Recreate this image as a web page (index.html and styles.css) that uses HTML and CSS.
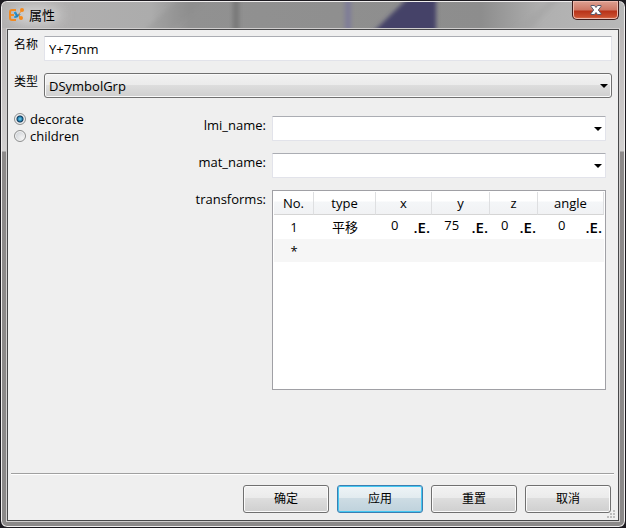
FILE: index.html
```html
<!DOCTYPE html>
<html lang="zh-CN">
<head>
<meta charset="utf-8">
<title>属性</title>
<link rel="stylesheet" href="styles.css">
</head>
<body>
<main class="window">
  <svg class="glass" viewBox="0 0 622 26" preserveAspectRatio="none" aria-hidden="true">
    <defs>
      <linearGradient id="base">
        <stop offset="0" stop-color="#b2b0b0"/>
        <stop offset=".24" stop-color="#acacac"/>
        <stop offset=".3" stop-color="#919191"/>
        <stop offset=".77" stop-color="#8d8d8d"/>
        <stop offset=".87" stop-color="#b0b0b0"/>
        <stop offset="1" stop-color="#b8b8b8"/>
      </linearGradient>
      <filter id="soft" x="-50%" y="-50%" width="200%" height="200%"><feGaussianBlur stdDeviation="2"/></filter>
      <filter id="halo" x="-50%" y="-50%" width="200%" height="200%"><feGaussianBlur stdDeviation="7"/></filter>
    </defs>
    <rect width="622" height="26" fill="url(#base)"/>
    <g filter="url(#soft)">
      <path d="M178 -4h28l-38 34h-28z" fill="#858585" opacity=".25"/>
      <path d="M231 -5h6v36h-6z" fill="#777"/>
      <path d="M343 -5h6v36h-6z" fill="#7e7c98"/>
      <path d="M407 -5h27v36h-64z" fill="#444268"/>
      <path d="M552 -5h8l-36 36h-16z" fill="#a2a2a2" opacity=".5"/>
    </g>
    <ellipse cx="34" cy="13" rx="26" ry="8" fill="#e4e4e4" opacity=".8" filter="url(#halo)"/>
  </svg>
  <header class="titlebar">
    <svg class="logo" viewBox="0 0 15 14" aria-hidden="true">
      <path d="M7 2H3Q1 2 1 4v6q0 2 2 2h4M2 7h3" fill="none" stroke="#f08a24" stroke-width="2"/>
      <path d="M6 4l2 4 3-2M6 9l3-1" fill="none" stroke="#2584bd" stroke-width="2"/>
      <path d="M13 2l-3 4 1 5" fill="none" stroke="#ed9036" stroke-width="1"/>
      <circle cx="13" cy="2" r="2" fill="#f58a1c"/>
      <circle cx="12" cy="10" r="2" fill="#f58a1c"/>
      <circle cx="6" cy="5" r="1" fill="#2b9ad6"/>
      <circle cx="6" cy="9" r="1" fill="#2b9ad6"/>
    </svg>
    <h1 class="title">属性</h1>
    <button class="close" type="button" aria-label="关闭">
      <svg viewBox="0 0 12 10" aria-hidden="true"><path d="M1 .5h3.500L6 2.500 7.500.5H11v1L8.300 5 11 8.500v1H7.500L6 7.500 4.500 9.500H1v-1L3.700 5 1 1.500z" fill="#fff" stroke="#555a6c"/></svg>
    </button>
  </header>
  <form class="client">
    <div class="general">
      <label for="name">名称</label>
      <input class="field" id="name" type="text" value="Y+75nm">
      <label for="kind">类型</label>
      <span class="combo"><select class="field raised" id="kind"><option>DSymbolGrp</option></select></span>
    </div>
    <div class="details">
      <div class="modes">
        <label><input type="radio" name="mode" checked>decorate</label>
        <label><input type="radio" name="mode">children</label>
      </div>
      <div class="props">
        <label for="lmi">lmi_name:</label>
        <span class="combo"><select class="field" id="lmi"><option></option></select></span>
        <label for="mat">mat_name:</label>
        <span class="combo"><select class="field" id="mat"><option></option></select></span>
        <span class="caption" id="transforms">transforms:</span>
        <div class="list">
          <table aria-labelledby="transforms">
            <colgroup><col class="c-no"><col class="c-type"><col class="c-x"><col class="c-y"><col class="c-z"><col class="c-angle"></colgroup>
            <thead><tr><th>No.</th><th>type</th><th>x</th><th>y</th><th>z</th><th>angle</th></tr></thead>
            <tbody>
              <tr>
                <td>1</td><td>平移</td>
                <td><div class="value"><span>0</span><button type="button">.E.</button></div></td>
                <td><div class="value"><span>75</span><button type="button">.E.</button></div></td>
                <td><div class="value"><span>0</span><button type="button">.E.</button></div></td>
                <td><div class="value"><span>0</span><button type="button">.E.</button></div></td>
              </tr>
              <tr><td>*</td><td></td><td></td><td></td><td></td><td></td></tr>
            </tbody>
          </table>
        </div>
      </div>
    </div>
    <footer class="actions">
      <button type="button">确定</button>
      <button type="button" class="primary">应用</button>
      <button type="button">重置</button>
      <button type="button">取消</button>
    </footer>
    <svg class="grip" viewBox="0 0 8 8" aria-hidden="true">
      <path d="M6 0h2v2H6zM3 3h2v2H3zM6 3h2v2H6zM0 6h2v2H0zM3 6h2v2H3zM6 6h2v2H6z" fill="#bdbdbd"/>
    </svg>
  </form>
</main>
</body>
</html>
```
FILE: styles.css
```css
* { box-sizing: border-box; }

body {
  margin: 0;
  background: #1c1a20;
  color: #000;
  font: 13px/18px "Open Sans", "Noto Sans CJK SC", sans-serif;
}

button, input, select { font: inherit; color: inherit; }

.window {
  position: relative;
  display: flex;
  flex-direction: column;
  min-height: 100vh;
  padding: 0 6px 6px;
  border: 1px solid #1c1a20;
  border-radius: 7px;
  box-shadow: inset 0 0 0 1px #f0eeee;
  background: linear-gradient(#b5b1b1 0, #d2d0d0 150px, #8d8a8a 151px, #8b8989 100%);
}

.glass {
  position: absolute;
  top: 1px;
  left: 1px;
  width: calc(100% - 2px);
  height: 26px;
  border-radius: 5px 5px 0 0;
}

.titlebar {
  position: relative;
  display: flex;
  align-items: center;
  height: 28px;
  padding-left: 2px;
}

.logo { width: 15px; height: 14px; }

.title {
  margin: 0 0 0 5px;
  font-size: 13px;
  font-weight: 400;
}

.close {
  display: flex;
  align-items: center;
  justify-content: center;
  align-self: flex-start;
  width: 47px;
  height: 19px;
  margin-left: auto;
  padding: 0;
  border: 1px solid #3f1d1c;
  border-top: 0;
  border-radius: 0 0 5px 5px;
  box-shadow: inset 0 0 0 1px #eeb9ad;
  background: linear-gradient(#dda192 0, #cd7765 9px, #b83218 10px, #ca4f30 16px, #e28b64 100%);
}

.close svg { width: 12px; height: 10px; }

.client {
  position: relative;
  flex: 1;
  display: flex;
  flex-direction: column;
  padding: 6px 6px 7px 3px;
  border: 1px solid #48484a;
  outline: 1px solid #d0cece;
  background: #efefef;
}

.general {
  display: grid;
  grid-template-columns: 27px 1fr;
  gap: 12px 3px;
  padding-left: 3px;
}

.general > label { white-space: nowrap; font-size: 12px; }

.field {
  display: block;
  width: 100%;
  height: 25px;
  padding: 0 4px;
  border: 1px solid #e2e3ea;
  border-top-color: #abadb3;
  border-radius: 1px;
  outline: 0;
  background: #fff;
  appearance: none;
}

.combo { position: relative; display: block; }

.combo::after {
  content: "";
  position: absolute;
  top: 11px;
  right: 4px;
  border: 4px solid transparent;
  border-top-color: #000;
  border-bottom: 0;
  pointer-events: none;
}

.raised {
  border: 1px solid #707070;
  border-radius: 3px;
  box-shadow: inset 0 0 0 1px #fafafa;
  background: linear-gradient(#f2f2f2 0, #ebebeb 48%, #dddddd 50%, #cfcfcf 100%);
}

.details {
  flex: 1;
  display: grid;
  grid-template-columns: 1fr 412px;
  align-items: start;
  padding: 12px 6px 0 3px;
}

.modes label { display: flex; align-items: center; gap: 4px; height: 17px; }

.modes input {
  width: 12px;
  height: 12px;
  margin: 0;
  border: 1px solid #8e8f8f;
  border-radius: 50%;
  box-shadow: inset 0 0 0 1px #f4f4f4;
  background: radial-gradient(circle at 70% 70%, #f4f4f4, #c5cad0);
  appearance: none;
}

.modes input:checked {
  background: radial-gradient(circle, #7fd2f2 0, #2487b4 2px, #123a5c 3px, #d9dde1 4px);
}

.props {
  display: grid;
  grid-template-columns: 1fr 334px;
  gap: 12px 6px;
  padding-top: 6px;
}

.props > label, .caption { text-align: right; }

.list {
  height: 200px;
  padding: 1px;
  border: 1px solid #a0a0a5;
  background: #fff;
}

table {
  width: 100%;
  border-collapse: separate;
  border-spacing: 0;
  table-layout: fixed;
}

.c-no { width: 40px; }
.c-type { width: 62px; }
.c-x { width: 56px; }
.c-y { width: 58px; }
.c-z { width: 48px; }

th, td {
  height: 23px;
  padding: 0;
  text-align: center;
  font-weight: 400;
}

th {
  border-right: 1px solid #dedfe1;
  border-bottom: 1px solid #d5d5d5;
  background: linear-gradient(#fff 0, #fff 9px, #f4f6f8 10px, #f1f2f4 100%);
}

tbody tr:first-child td { height: 24px; }
tbody tr:nth-child(2) { background: #f6f6f6; }

.value { display: flex; align-items: center; height: 24px; padding-right: 2px; }
.value span { flex: 1; height: 22px; }

.value button {
  padding: 0;
  border: 0;
  background: none;
  font-size: 15px;
  font-weight: 600;
}

.actions {
  display: flex;
  justify-content: flex-end;
  gap: 8px;
  margin-right: -2px;
  padding: 11px 3px 0 0;
  border-top: 1px solid #a0a0a0;
  box-shadow: inset 0 1px #fff;
}

.actions button {
  width: 86px;
  height: 28px;
  padding: 0;
  border: 1px solid #707070;
  border-radius: 3px;
  box-shadow: inset 0 0 0 1px #fbfbfb;
  background: linear-gradient(#f2f2f2 0, #ebebeb 46%, #dddddd 48%, #cfcfcf 100%);
  font-size: 12px;
}

.actions .primary {
  border-color: #3c7fb1;
  box-shadow: inset 0 0 0 1px #45c8f2;
  background: linear-gradient(#eef4f7 0, #e2ebef 46%, #cddce4 48%, #bfd2dc 100%);
}

.grip {
  position: absolute;
  right: 3px;
  bottom: 2px;
  width: 8px;
  height: 8px;
}
```
